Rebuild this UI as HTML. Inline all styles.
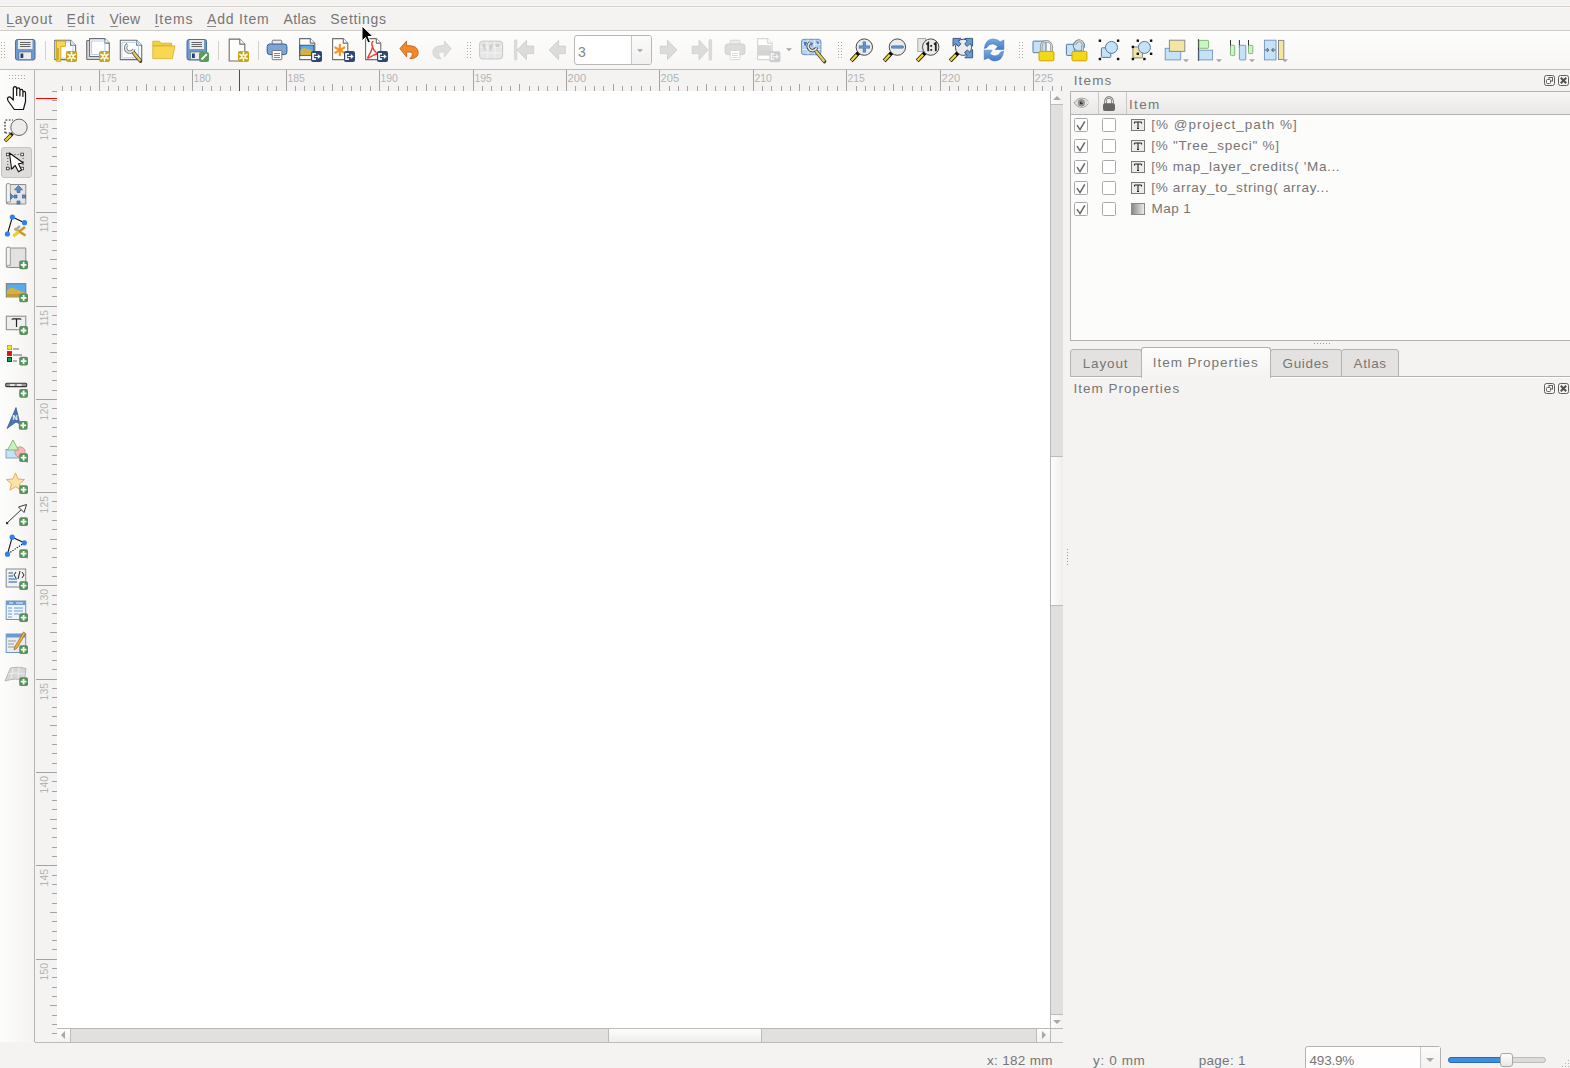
<!DOCTYPE html><html><head><meta charset="utf-8"><style>
html,body{margin:0;padding:0;}
body{width:1570px;height:1068px;overflow:hidden;position:relative;background:#f4f3f1;font-family:"Liberation Sans",sans-serif;}
.t{position:absolute;white-space:pre;line-height:1;}
svg{position:absolute;overflow:visible;}
</style></head><body>
<div style="position:absolute;left:0px;top:5px;width:1570px;height:1px;background:#f9f9f8"></div>
<div style="position:absolute;left:0px;top:6px;width:1570px;height:1px;background:repeating-linear-gradient(90deg,#d2d1cf 0,#d2d1cf 4px,#d8cdb8 4px,#d8cdb8 5px)"></div>
<div style="position:absolute;left:0px;top:7px;width:1570px;height:1px;background:#f9f9f8"></div>
<div class="t" style="left:6.0px;top:11.95px;font-size:14px;color:#767676;letter-spacing:0.84px;">Layout</div>
<div style="position:absolute;left:7px;top:26px;width:7.5px;height:1px;background:#8a8a8a"></div>
<div class="t" style="left:66.5px;top:11.95px;font-size:14px;color:#767676;letter-spacing:1.267px;">Edit</div>
<div style="position:absolute;left:68px;top:26px;width:7px;height:1px;background:#8a8a8a"></div>
<div class="t" style="left:109.6px;top:11.95px;font-size:14px;color:#767676;letter-spacing:0.167px;">View</div>
<div style="position:absolute;left:110px;top:26px;width:7.5px;height:1px;background:#8a8a8a"></div>
<div class="t" style="left:154.4px;top:11.95px;font-size:14px;color:#767676;letter-spacing:1.0px;">Items</div>
<div style="position:absolute;left:155px;top:26px;width:3.5px;height:1px;background:#8a8a8a"></div>
<div class="t" style="left:207.1px;top:11.95px;font-size:14px;color:#767676;letter-spacing:0.786px;">Add Item</div>
<div style="position:absolute;left:207px;top:26px;width:9px;height:1px;background:#8a8a8a"></div>
<div class="t" style="left:283.5px;top:11.95px;font-size:14px;color:#767676;letter-spacing:0.375px;">Atlas</div>
<div class="t" style="left:330.3px;top:11.95px;font-size:14px;color:#767676;letter-spacing:0.729px;">Settings</div>
<div style="position:absolute;left:0px;top:30px;width:1570px;height:1px;background:#cfcdca"></div>
<div style="position:absolute;left:0px;top:31px;width:1570px;height:38px;background:linear-gradient(#fdfdfc,#f7f6f5)"></div>
<div style="position:absolute;left:0px;top:69px;width:1570px;height:1px;background:#bdbcba"></div>
<div style="position:absolute;left:0px;top:70px;width:34px;height:972px;background:linear-gradient(90deg,#fdfdfc,#f4f3f1)"></div>
<div style="position:absolute;left:34px;top:70px;width:1px;height:972px;background:#b6b5b3"></div>
<div style="position:absolute;left:35px;top:70px;width:1028px;height:21px;background:#f4f3f1"></div>
<div style="position:absolute;left:35px;top:91px;width:22px;height:951px;background:#f4f3f1"></div>
<div style="position:absolute;left:57px;top:91px;width:993px;height:937px;background:#ffffff"></div>
<svg style="position:absolute;left:35px;top:70px" width="1028" height="21"><g stroke="#a3a3a3" stroke-width="1"><line x1="27.5" y1="16" x2="27.5" y2="21"/><line x1="36.5" y1="16" x2="36.5" y2="21"/><line x1="45.5" y1="16" x2="45.5" y2="21"/><line x1="55.5" y1="16" x2="55.5" y2="21"/><line x1="64.5" y1="0" x2="64.5" y2="21"/><line x1="73.5" y1="16" x2="73.5" y2="21"/><line x1="83.5" y1="16" x2="83.5" y2="21"/><line x1="92.5" y1="16" x2="92.5" y2="21"/><line x1="101.5" y1="16" x2="101.5" y2="21"/><line x1="111.5" y1="14" x2="111.5" y2="21"/><line x1="120.5" y1="16" x2="120.5" y2="21"/><line x1="129.5" y1="16" x2="129.5" y2="21"/><line x1="139.5" y1="16" x2="139.5" y2="21"/><line x1="148.5" y1="16" x2="148.5" y2="21"/><line x1="157.5" y1="0" x2="157.5" y2="21"/><line x1="167.5" y1="16" x2="167.5" y2="21"/><line x1="176.5" y1="16" x2="176.5" y2="21"/><line x1="185.5" y1="16" x2="185.5" y2="21"/><line x1="195.5" y1="16" x2="195.5" y2="21"/><line x1="204.5" y1="14" x2="204.5" y2="21"/><line x1="213.5" y1="16" x2="213.5" y2="21"/><line x1="223.5" y1="16" x2="223.5" y2="21"/><line x1="232.5" y1="16" x2="232.5" y2="21"/><line x1="241.5" y1="16" x2="241.5" y2="21"/><line x1="251.5" y1="0" x2="251.5" y2="21"/><line x1="260.5" y1="16" x2="260.5" y2="21"/><line x1="269.5" y1="16" x2="269.5" y2="21"/><line x1="279.5" y1="16" x2="279.5" y2="21"/><line x1="288.5" y1="16" x2="288.5" y2="21"/><line x1="297.5" y1="14" x2="297.5" y2="21"/><line x1="307.5" y1="16" x2="307.5" y2="21"/><line x1="316.5" y1="16" x2="316.5" y2="21"/><line x1="325.5" y1="16" x2="325.5" y2="21"/><line x1="335.5" y1="16" x2="335.5" y2="21"/><line x1="344.5" y1="0" x2="344.5" y2="21"/><line x1="353.5" y1="16" x2="353.5" y2="21"/><line x1="363.5" y1="16" x2="363.5" y2="21"/><line x1="372.5" y1="16" x2="372.5" y2="21"/><line x1="381.5" y1="16" x2="381.5" y2="21"/><line x1="391.5" y1="14" x2="391.5" y2="21"/><line x1="400.5" y1="16" x2="400.5" y2="21"/><line x1="410.5" y1="16" x2="410.5" y2="21"/><line x1="419.5" y1="16" x2="419.5" y2="21"/><line x1="428.5" y1="16" x2="428.5" y2="21"/><line x1="438.5" y1="0" x2="438.5" y2="21"/><line x1="447.5" y1="16" x2="447.5" y2="21"/><line x1="456.5" y1="16" x2="456.5" y2="21"/><line x1="466.5" y1="16" x2="466.5" y2="21"/><line x1="475.5" y1="16" x2="475.5" y2="21"/><line x1="484.5" y1="14" x2="484.5" y2="21"/><line x1="494.5" y1="16" x2="494.5" y2="21"/><line x1="503.5" y1="16" x2="503.5" y2="21"/><line x1="512.5" y1="16" x2="512.5" y2="21"/><line x1="522.5" y1="16" x2="522.5" y2="21"/><line x1="531.5" y1="0" x2="531.5" y2="21"/><line x1="540.5" y1="16" x2="540.5" y2="21"/><line x1="550.5" y1="16" x2="550.5" y2="21"/><line x1="559.5" y1="16" x2="559.5" y2="21"/><line x1="568.5" y1="16" x2="568.5" y2="21"/><line x1="578.5" y1="14" x2="578.5" y2="21"/><line x1="587.5" y1="16" x2="587.5" y2="21"/><line x1="596.5" y1="16" x2="596.5" y2="21"/><line x1="606.5" y1="16" x2="606.5" y2="21"/><line x1="615.5" y1="16" x2="615.5" y2="21"/><line x1="624.5" y1="0" x2="624.5" y2="21"/><line x1="634.5" y1="16" x2="634.5" y2="21"/><line x1="643.5" y1="16" x2="643.5" y2="21"/><line x1="652.5" y1="16" x2="652.5" y2="21"/><line x1="662.5" y1="16" x2="662.5" y2="21"/><line x1="671.5" y1="14" x2="671.5" y2="21"/><line x1="680.5" y1="16" x2="680.5" y2="21"/><line x1="690.5" y1="16" x2="690.5" y2="21"/><line x1="699.5" y1="16" x2="699.5" y2="21"/><line x1="708.5" y1="16" x2="708.5" y2="21"/><line x1="718.5" y1="0" x2="718.5" y2="21"/><line x1="727.5" y1="16" x2="727.5" y2="21"/><line x1="736.5" y1="16" x2="736.5" y2="21"/><line x1="746.5" y1="16" x2="746.5" y2="21"/><line x1="755.5" y1="16" x2="755.5" y2="21"/><line x1="764.5" y1="14" x2="764.5" y2="21"/><line x1="774.5" y1="16" x2="774.5" y2="21"/><line x1="783.5" y1="16" x2="783.5" y2="21"/><line x1="792.5" y1="16" x2="792.5" y2="21"/><line x1="802.5" y1="16" x2="802.5" y2="21"/><line x1="811.5" y1="0" x2="811.5" y2="21"/><line x1="821.5" y1="16" x2="821.5" y2="21"/><line x1="830.5" y1="16" x2="830.5" y2="21"/><line x1="839.5" y1="16" x2="839.5" y2="21"/><line x1="849.5" y1="16" x2="849.5" y2="21"/><line x1="858.5" y1="14" x2="858.5" y2="21"/><line x1="867.5" y1="16" x2="867.5" y2="21"/><line x1="877.5" y1="16" x2="877.5" y2="21"/><line x1="886.5" y1="16" x2="886.5" y2="21"/><line x1="895.5" y1="16" x2="895.5" y2="21"/><line x1="905.5" y1="0" x2="905.5" y2="21"/><line x1="914.5" y1="16" x2="914.5" y2="21"/><line x1="923.5" y1="16" x2="923.5" y2="21"/><line x1="933.5" y1="16" x2="933.5" y2="21"/><line x1="942.5" y1="16" x2="942.5" y2="21"/><line x1="951.5" y1="14" x2="951.5" y2="21"/><line x1="961.5" y1="16" x2="961.5" y2="21"/><line x1="970.5" y1="16" x2="970.5" y2="21"/><line x1="979.5" y1="16" x2="979.5" y2="21"/><line x1="989.5" y1="16" x2="989.5" y2="21"/><line x1="998.5" y1="0" x2="998.5" y2="21"/><line x1="1007.5" y1="16" x2="1007.5" y2="21"/><line x1="1017.5" y1="16" x2="1017.5" y2="21"/><line x1="1026.5" y1="16" x2="1026.5" y2="21"/></g><g fill="#b2b4b7" font-family="Liberation Sans" font-size="11"><text x="65.5" y="12" textLength="16.200000000000003" lengthAdjust="spacingAndGlyphs">175</text><text x="158.5" y="12" textLength="17.400000000000002" lengthAdjust="spacingAndGlyphs">180</text><text x="252.5" y="12" textLength="17.400000000000002" lengthAdjust="spacingAndGlyphs">185</text><text x="345.5" y="12" textLength="17.400000000000002" lengthAdjust="spacingAndGlyphs">190</text><text x="439.5" y="12" textLength="17.400000000000002" lengthAdjust="spacingAndGlyphs">195</text><text x="532.5" y="12" textLength="18.6" lengthAdjust="spacingAndGlyphs">200</text><text x="625.5" y="12" textLength="18.6" lengthAdjust="spacingAndGlyphs">205</text><text x="719.5" y="12" textLength="17.400000000000002" lengthAdjust="spacingAndGlyphs">210</text><text x="812.5" y="12" textLength="17.400000000000002" lengthAdjust="spacingAndGlyphs">215</text><text x="906.5" y="12" textLength="18.6" lengthAdjust="spacingAndGlyphs">220</text><text x="999.5" y="12" textLength="18.6" lengthAdjust="spacingAndGlyphs">225</text></g></svg>
<svg style="position:absolute;left:35px;top:91px" width="22" height="951"><g stroke="#a3a3a3" stroke-width="1"><line x1="17" y1="0.5" x2="22" y2="0.5"/><line x1="17" y1="9.5" x2="22" y2="9.5"/><line x1="17" y1="19.5" x2="22" y2="19.5"/><line x1="1" y1="28.5" x2="22" y2="28.5"/><line x1="17" y1="37.5" x2="22" y2="37.5"/><line x1="17" y1="47.5" x2="22" y2="47.5"/><line x1="17" y1="56.5" x2="22" y2="56.5"/><line x1="17" y1="65.5" x2="22" y2="65.5"/><line x1="15" y1="75.5" x2="22" y2="75.5"/><line x1="17" y1="84.5" x2="22" y2="84.5"/><line x1="17" y1="93.5" x2="22" y2="93.5"/><line x1="17" y1="103.5" x2="22" y2="103.5"/><line x1="17" y1="112.5" x2="22" y2="112.5"/><line x1="1" y1="121.5" x2="22" y2="121.5"/><line x1="17" y1="131.5" x2="22" y2="131.5"/><line x1="17" y1="140.5" x2="22" y2="140.5"/><line x1="17" y1="149.5" x2="22" y2="149.5"/><line x1="17" y1="159.5" x2="22" y2="159.5"/><line x1="15" y1="168.5" x2="22" y2="168.5"/><line x1="17" y1="177.5" x2="22" y2="177.5"/><line x1="17" y1="187.5" x2="22" y2="187.5"/><line x1="17" y1="196.5" x2="22" y2="196.5"/><line x1="17" y1="205.5" x2="22" y2="205.5"/><line x1="1" y1="215.5" x2="22" y2="215.5"/><line x1="17" y1="224.5" x2="22" y2="224.5"/><line x1="17" y1="233.5" x2="22" y2="233.5"/><line x1="17" y1="243.5" x2="22" y2="243.5"/><line x1="17" y1="252.5" x2="22" y2="252.5"/><line x1="15" y1="261.5" x2="22" y2="261.5"/><line x1="17" y1="271.5" x2="22" y2="271.5"/><line x1="17" y1="280.5" x2="22" y2="280.5"/><line x1="17" y1="289.5" x2="22" y2="289.5"/><line x1="17" y1="299.5" x2="22" y2="299.5"/><line x1="1" y1="308.5" x2="22" y2="308.5"/><line x1="17" y1="317.5" x2="22" y2="317.5"/><line x1="17" y1="327.5" x2="22" y2="327.5"/><line x1="17" y1="336.5" x2="22" y2="336.5"/><line x1="17" y1="345.5" x2="22" y2="345.5"/><line x1="15" y1="355.5" x2="22" y2="355.5"/><line x1="17" y1="364.5" x2="22" y2="364.5"/><line x1="17" y1="373.5" x2="22" y2="373.5"/><line x1="17" y1="383.5" x2="22" y2="383.5"/><line x1="17" y1="392.5" x2="22" y2="392.5"/><line x1="1" y1="401.5" x2="22" y2="401.5"/><line x1="17" y1="410.5" x2="22" y2="410.5"/><line x1="17" y1="420.5" x2="22" y2="420.5"/><line x1="17" y1="429.5" x2="22" y2="429.5"/><line x1="17" y1="438.5" x2="22" y2="438.5"/><line x1="15" y1="448.5" x2="22" y2="448.5"/><line x1="17" y1="457.5" x2="22" y2="457.5"/><line x1="17" y1="466.5" x2="22" y2="466.5"/><line x1="17" y1="476.5" x2="22" y2="476.5"/><line x1="17" y1="485.5" x2="22" y2="485.5"/><line x1="1" y1="494.5" x2="22" y2="494.5"/><line x1="17" y1="504.5" x2="22" y2="504.5"/><line x1="17" y1="513.5" x2="22" y2="513.5"/><line x1="17" y1="522.5" x2="22" y2="522.5"/><line x1="17" y1="532.5" x2="22" y2="532.5"/><line x1="15" y1="541.5" x2="22" y2="541.5"/><line x1="17" y1="550.5" x2="22" y2="550.5"/><line x1="17" y1="560.5" x2="22" y2="560.5"/><line x1="17" y1="569.5" x2="22" y2="569.5"/><line x1="17" y1="578.5" x2="22" y2="578.5"/><line x1="1" y1="588.5" x2="22" y2="588.5"/><line x1="17" y1="597.5" x2="22" y2="597.5"/><line x1="17" y1="606.5" x2="22" y2="606.5"/><line x1="17" y1="616.5" x2="22" y2="616.5"/><line x1="17" y1="625.5" x2="22" y2="625.5"/><line x1="15" y1="634.5" x2="22" y2="634.5"/><line x1="17" y1="644.5" x2="22" y2="644.5"/><line x1="17" y1="653.5" x2="22" y2="653.5"/><line x1="17" y1="662.5" x2="22" y2="662.5"/><line x1="17" y1="672.5" x2="22" y2="672.5"/><line x1="1" y1="681.5" x2="22" y2="681.5"/><line x1="17" y1="690.5" x2="22" y2="690.5"/><line x1="17" y1="700.5" x2="22" y2="700.5"/><line x1="17" y1="709.5" x2="22" y2="709.5"/><line x1="17" y1="718.5" x2="22" y2="718.5"/><line x1="15" y1="728.5" x2="22" y2="728.5"/><line x1="17" y1="737.5" x2="22" y2="737.5"/><line x1="17" y1="746.5" x2="22" y2="746.5"/><line x1="17" y1="756.5" x2="22" y2="756.5"/><line x1="17" y1="765.5" x2="22" y2="765.5"/><line x1="1" y1="774.5" x2="22" y2="774.5"/><line x1="17" y1="784.5" x2="22" y2="784.5"/><line x1="17" y1="793.5" x2="22" y2="793.5"/><line x1="17" y1="802.5" x2="22" y2="802.5"/><line x1="17" y1="812.5" x2="22" y2="812.5"/><line x1="15" y1="821.5" x2="22" y2="821.5"/><line x1="17" y1="830.5" x2="22" y2="830.5"/><line x1="17" y1="840.5" x2="22" y2="840.5"/><line x1="17" y1="849.5" x2="22" y2="849.5"/><line x1="17" y1="858.5" x2="22" y2="858.5"/><line x1="1" y1="868.5" x2="22" y2="868.5"/><line x1="17" y1="877.5" x2="22" y2="877.5"/><line x1="17" y1="886.5" x2="22" y2="886.5"/><line x1="17" y1="896.5" x2="22" y2="896.5"/><line x1="17" y1="905.5" x2="22" y2="905.5"/><line x1="15" y1="914.5" x2="22" y2="914.5"/><line x1="17" y1="924.5" x2="22" y2="924.5"/><line x1="17" y1="933.5" x2="22" y2="933.5"/><line x1="17" y1="942.5" x2="22" y2="942.5"/></g><g fill="#b2b4b7" font-family="Liberation Sans" font-size="11"><text transform="translate(13,32) rotate(-90)" text-anchor="end" textLength="17.400000000000002" lengthAdjust="spacingAndGlyphs">105</text><text transform="translate(13,125) rotate(-90)" text-anchor="end" textLength="16.200000000000003" lengthAdjust="spacingAndGlyphs">110</text><text transform="translate(13,219) rotate(-90)" text-anchor="end" textLength="16.200000000000003" lengthAdjust="spacingAndGlyphs">115</text><text transform="translate(13,312) rotate(-90)" text-anchor="end" textLength="17.400000000000002" lengthAdjust="spacingAndGlyphs">120</text><text transform="translate(13,405) rotate(-90)" text-anchor="end" textLength="17.400000000000002" lengthAdjust="spacingAndGlyphs">125</text><text transform="translate(13,498) rotate(-90)" text-anchor="end" textLength="17.400000000000002" lengthAdjust="spacingAndGlyphs">130</text><text transform="translate(13,592) rotate(-90)" text-anchor="end" textLength="17.400000000000002" lengthAdjust="spacingAndGlyphs">135</text><text transform="translate(13,685) rotate(-90)" text-anchor="end" textLength="17.400000000000002" lengthAdjust="spacingAndGlyphs">140</text><text transform="translate(13,778) rotate(-90)" text-anchor="end" textLength="17.400000000000002" lengthAdjust="spacingAndGlyphs">145</text><text transform="translate(13,872) rotate(-90)" text-anchor="end" textLength="17.400000000000002" lengthAdjust="spacingAndGlyphs">150</text></g></svg>
<div style="position:absolute;left:239px;top:70px;width:1px;height:21px;background:#ff0000"></div>
<div style="position:absolute;left:36px;top:98px;width:21px;height:1px;background:#ff0000"></div>
<div style="position:absolute;left:35px;top:1042px;width:1028px;height:1px;background:#bcbbb9"></div>
<div style="position:absolute;left:1050px;top:91px;width:1px;height:951px;background:#b9b8b6"></div>
<div style="position:absolute;left:1051px;top:91px;width:12px;height:937px;background:#e1e0de"></div>
<div style="position:absolute;left:1051px;top:91px;width:12px;height:13px;background:linear-gradient(90deg,#fdfdfd,#f2f1f0)"></div>
<div style="position:absolute;left:1051px;top:104px;width:12px;height:1px;background:#bdbcba"></div>
<div style="position:absolute;left:1051px;top:456px;width:12px;height:150px;background:linear-gradient(90deg,#fdfdfd,#efeeec);border-top:1px solid #bdbcba;border-bottom:1px solid #bdbcba;box-sizing:border-box"></div>
<div style="position:absolute;left:1051px;top:1014px;width:12px;height:1px;background:#bdbcba"></div>
<div style="position:absolute;left:1051px;top:1015px;width:12px;height:13px;background:linear-gradient(90deg,#fdfdfd,#f2f1f0)"></div>
<svg style="left:1052px;top:95px" width="10" height="6"><path d="M1 5 L5 1 L9 5 Z" fill="#a8a8a8"/></svg>
<svg style="left:1052px;top:1019px" width="10" height="6"><path d="M1 1 L5 5 L9 1 Z" fill="#a8a8a8"/></svg>
<div style="position:absolute;left:57px;top:1028px;width:1006px;height:1px;background:#b9b8b6"></div>
<div style="position:absolute;left:57px;top:1029px;width:993px;height:13px;background:#e1e0de"></div>
<div style="position:absolute;left:57px;top:1029px;width:13px;height:13px;background:linear-gradient(#fdfdfd,#f2f1f0)"></div>
<div style="position:absolute;left:70px;top:1029px;width:1px;height:13px;background:#bdbcba"></div>
<div style="position:absolute;left:608px;top:1028px;width:154px;height:15px;background:linear-gradient(#fdfdfd,#efeeec);border:1px solid #bdbcba;box-sizing:border-box"></div>
<div style="position:absolute;left:1036px;top:1029px;width:1px;height:13px;background:#bdbcba"></div>
<div style="position:absolute;left:1037px;top:1029px;width:13px;height:13px;background:linear-gradient(#fdfdfd,#f2f1f0)"></div>
<div style="position:absolute;left:1051px;top:1029px;width:12px;height:13px;background:#f4f3f1"></div>
<svg style="left:60px;top:1030px" width="6" height="10"><path d="M5 1 L1 5 L5 9 Z" fill="#a8a8a8"/></svg>
<svg style="left:1041px;top:1030px" width="6" height="10"><path d="M1 1 L5 5 L1 9 Z" fill="#a8a8a8"/></svg>
<div class="t" style="left:1073.7px;top:74.37px;font-size:13.5px;color:#767676;letter-spacing:1.15px;">Items</div>
<svg style="left:1544px;top:75px" width="25" height="11" viewBox="0 0 25 11"><rect x="0.5" y="0.5" width="10" height="10" rx="2" fill="none" stroke="#5f5f5f" stroke-width="1"/><rect x="5" y="2.5" width="3.5" height="3.5" fill="none" stroke="#5f5f5f" stroke-width="1"/><rect x="2.5" y="4.5" width="4" height="4" rx="1" fill="#fff" stroke="#5f5f5f" stroke-width="1"/><g transform="translate(14,0)"><rect x="0.5" y="0.5" width="10" height="10" rx="2" fill="none" stroke="#5f5f5f" stroke-width="1"/><path d="M2.8 2.8 L8.2 8.2 M8.2 2.8 L2.8 8.2" stroke="#505050" stroke-width="2"/></g></svg>
<div style="position:absolute;left:1070px;top:91px;width:500px;height:250px;background:#fcfcfb;border-left:1px solid #b3b2b0;border-top:1px solid #b3b2b0;border-bottom:1px solid #b3b2b0;box-sizing:border-box"></div>
<div style="position:absolute;left:1071px;top:92px;width:499px;height:22px;background:linear-gradient(#f7f6f5,#e9e8e6)"></div>
<div style="position:absolute;left:1071px;top:114px;width:499px;height:1px;background:#b3b2b0"></div>
<div style="position:absolute;left:1098px;top:92px;width:1px;height:22px;background:#c9c8c6"></div>
<div style="position:absolute;left:1126px;top:92px;width:1px;height:22px;background:#c9c8c6"></div>
<svg style="left:1073px;top:97px" width="16" height="12" viewBox="0 0 16 12"><path d="M0.8 6 Q4 1 8.5 1 Q13 1 15.5 4.5 M0.8 6 Q4 10.5 8.5 10.5 Q13 10.5 15.5 6.5" fill="none" stroke="#9a9a9a" stroke-width="0.9"/><path d="M2 6 Q5 2.5 8.5 2.5 Q12 2.5 14 6 Q12 9 8.5 9 Q5 9 2 6Z" fill="#f2f2f2" stroke="#b0b0b0" stroke-width="0.6"/><circle cx="8.3" cy="5.8" r="3.3" fill="#9a9a9a" stroke="#777" stroke-width="0.6"/><circle cx="8.3" cy="5.8" r="1.6" fill="#333"/><circle cx="9" cy="5" r="0.6" fill="#fff"/></svg>
<svg style="left:1102px;top:95.5px" width="14" height="16" viewBox="0 0 14 16"><path d="M3.5 8 V5 A3.5 3.5 0 0 1 10.5 5 V8" fill="none" stroke="#666" stroke-width="2.4"/><path d="M3.5 8 V5 A3.5 3.5 0 0 1 10.5 5 V8" fill="none" stroke="#f0efed" stroke-width="0.9"/><rect x="1" y="7.3" width="12" height="7.6" rx="2" fill="#666"/></svg>
<div class="t" style="left:1129.0px;top:97.57px;font-size:13.5px;color:#767676;letter-spacing:1.333px;">Item</div>
<svg style="left:1074px;top:118px" width="14" height="14" viewBox="0 0 14 14"><rect x="0.5" y="0.5" width="13" height="13" rx="1" fill="#fff" stroke="#aaaaaa" stroke-width="1"/><path d="M3 7.2 L6 11.6 L10.8 3.3" fill="none" stroke="#666" stroke-width="1.5"/></svg>
<svg style="left:1102px;top:118px" width="14" height="14" viewBox="0 0 14 14"><rect x="0.5" y="0.5" width="13" height="13" rx="1" fill="#fff" stroke="#aaaaaa" stroke-width="1"/></svg>
<svg style="left:1131px;top:119px" width="14" height="12" viewBox="0 0 14 12"><rect x="0.5" y="0.5" width="13" height="11" fill="#ececec" stroke="#7a7a7a" stroke-width="1"/><path d="M3.5 3 H10.5 M3.5 3 V4.5 M10.5 3 V4.5 M7 3 V9.5 M6 9.5 H8" fill="none" stroke="#222" stroke-width="1.1"/></svg>
<div class="t" style="left:1151.2px;top:118.37px;font-size:13.5px;color:#767676;letter-spacing:1.033px;">[% @project_path %]</div>
<svg style="left:1074px;top:139px" width="14" height="14" viewBox="0 0 14 14"><rect x="0.5" y="0.5" width="13" height="13" rx="1" fill="#fff" stroke="#aaaaaa" stroke-width="1"/><path d="M3 7.2 L6 11.6 L10.8 3.3" fill="none" stroke="#666" stroke-width="1.5"/></svg>
<svg style="left:1102px;top:139px" width="14" height="14" viewBox="0 0 14 14"><rect x="0.5" y="0.5" width="13" height="13" rx="1" fill="#fff" stroke="#aaaaaa" stroke-width="1"/></svg>
<svg style="left:1131px;top:140px" width="14" height="12" viewBox="0 0 14 12"><rect x="0.5" y="0.5" width="13" height="11" fill="#ececec" stroke="#7a7a7a" stroke-width="1"/><path d="M3.5 3 H10.5 M3.5 3 V4.5 M10.5 3 V4.5 M7 3 V9.5 M6 9.5 H8" fill="none" stroke="#222" stroke-width="1.1"/></svg>
<div class="t" style="left:1151.2px;top:139.37px;font-size:13.5px;color:#767676;letter-spacing:0.765px;">[% "Tree_speci" %]</div>
<svg style="left:1074px;top:160px" width="14" height="14" viewBox="0 0 14 14"><rect x="0.5" y="0.5" width="13" height="13" rx="1" fill="#fff" stroke="#aaaaaa" stroke-width="1"/><path d="M3 7.2 L6 11.6 L10.8 3.3" fill="none" stroke="#666" stroke-width="1.5"/></svg>
<svg style="left:1102px;top:160px" width="14" height="14" viewBox="0 0 14 14"><rect x="0.5" y="0.5" width="13" height="13" rx="1" fill="#fff" stroke="#aaaaaa" stroke-width="1"/></svg>
<svg style="left:1131px;top:161px" width="14" height="12" viewBox="0 0 14 12"><rect x="0.5" y="0.5" width="13" height="11" fill="#ececec" stroke="#7a7a7a" stroke-width="1"/><path d="M3.5 3 H10.5 M3.5 3 V4.5 M10.5 3 V4.5 M7 3 V9.5 M6 9.5 H8" fill="none" stroke="#222" stroke-width="1.1"/></svg>
<div class="t" style="left:1151.2px;top:160.37px;font-size:13.5px;color:#767676;letter-spacing:0.659px;">[% map_layer_credits( 'Ma...</div>
<svg style="left:1074px;top:181px" width="14" height="14" viewBox="0 0 14 14"><rect x="0.5" y="0.5" width="13" height="13" rx="1" fill="#fff" stroke="#aaaaaa" stroke-width="1"/><path d="M3 7.2 L6 11.6 L10.8 3.3" fill="none" stroke="#666" stroke-width="1.5"/></svg>
<svg style="left:1102px;top:181px" width="14" height="14" viewBox="0 0 14 14"><rect x="0.5" y="0.5" width="13" height="13" rx="1" fill="#fff" stroke="#aaaaaa" stroke-width="1"/></svg>
<svg style="left:1131px;top:182px" width="14" height="12" viewBox="0 0 14 12"><rect x="0.5" y="0.5" width="13" height="11" fill="#ececec" stroke="#7a7a7a" stroke-width="1"/><path d="M3.5 3 H10.5 M3.5 3 V4.5 M10.5 3 V4.5 M7 3 V9.5 M6 9.5 H8" fill="none" stroke="#222" stroke-width="1.1"/></svg>
<div class="t" style="left:1151.2px;top:181.37px;font-size:13.5px;color:#767676;letter-spacing:0.696px;">[% array_to_string( array...</div>
<svg style="left:1074px;top:202px" width="14" height="14" viewBox="0 0 14 14"><rect x="0.5" y="0.5" width="13" height="13" rx="1" fill="#fff" stroke="#aaaaaa" stroke-width="1"/><path d="M3 7.2 L6 11.6 L10.8 3.3" fill="none" stroke="#666" stroke-width="1.5"/></svg>
<svg style="left:1102px;top:202px" width="14" height="14" viewBox="0 0 14 14"><rect x="0.5" y="0.5" width="13" height="13" rx="1" fill="#fff" stroke="#aaaaaa" stroke-width="1"/></svg>
<svg style="left:1131px;top:203px" width="14" height="12" viewBox="0 0 14 12"><defs><linearGradient id="mg" x1="0" x2="1"><stop offset="0" stop-color="#888"/><stop offset="1" stop-color="#eee"/></linearGradient></defs><rect x="0.5" y="0.5" width="13" height="11" fill="url(#mg)" stroke="#8a8a8a" stroke-width="1"/></svg>
<div class="t" style="left:1151.5px;top:202.37px;font-size:13.5px;color:#767676;letter-spacing:0.45px;">Map 1</div>
<svg style="left:1314px;top:343px" width="18" height="1" viewBox="0 0 18 1"><rect x="0" y="0" width="1" height="1" fill="#9a9a9a"/><rect x="3" y="0" width="1" height="1" fill="#9a9a9a"/><rect x="6" y="0" width="1" height="1" fill="#9a9a9a"/><rect x="9" y="0" width="1" height="1" fill="#9a9a9a"/><rect x="12" y="0" width="1" height="1" fill="#9a9a9a"/><rect x="15" y="0" width="1" height="1" fill="#9a9a9a"/></svg>
<div style="position:absolute;left:1070px;top:376px;width:500px;height:1px;background:#b3b2b0"></div>
<div style="position:absolute;left:1070px;top:377px;width:500px;height:1px;background:#ffffff"></div>
<div style="position:absolute;left:1070px;top:349px;width:72px;height:28px;background:#e3e2e0;border:1px solid #b3b2b0;border-radius:3px 3px 0 0;box-sizing:border-box"></div><div class="t" style="left:1082.7px;top:357.47px;font-size:13.5px;color:#767676;letter-spacing:0.86px;">Layout</div>
<div style="position:absolute;left:1270px;top:349px;width:72px;height:28px;background:#e3e2e0;border:1px solid #b3b2b0;border-radius:3px 3px 0 0;box-sizing:border-box"></div><div class="t" style="left:1282.5px;top:357.47px;font-size:13.5px;color:#767676;letter-spacing:0.66px;">Guides</div>
<div style="position:absolute;left:1341px;top:349px;width:58px;height:28px;background:#e3e2e0;border:1px solid #b3b2b0;border-radius:3px 3px 0 0;box-sizing:border-box"></div><div class="t" style="left:1353.5px;top:357.47px;font-size:13.5px;color:#767676;letter-spacing:0.625px;">Atlas</div>
<div style="position:absolute;left:1141px;top:347px;width:130px;height:31px;background:linear-gradient(#fdfdfd,#f4f3f1);border:1px solid #b3b2b0;border-bottom:none;border-radius:3px 3px 0 0;box-sizing:border-box"></div><div class="t" style="left:1152.8px;top:356.27px;font-size:13.5px;color:#767676;letter-spacing:0.964px;">Item Properties</div>
<div class="t" style="left:1073.6px;top:382.47px;font-size:13.5px;color:#767676;letter-spacing:1.0px;">Item Properties</div>
<svg style="left:1544px;top:383px" width="25" height="11" viewBox="0 0 25 11"><rect x="0.5" y="0.5" width="10" height="10" rx="2" fill="none" stroke="#5f5f5f" stroke-width="1"/><rect x="5" y="2.5" width="3.5" height="3.5" fill="none" stroke="#5f5f5f" stroke-width="1"/><rect x="2.5" y="4.5" width="4" height="4" rx="1" fill="#fff" stroke="#5f5f5f" stroke-width="1"/><g transform="translate(14,0)"><rect x="0.5" y="0.5" width="10" height="10" rx="2" fill="none" stroke="#5f5f5f" stroke-width="1"/><path d="M2.8 2.8 L8.2 8.2 M8.2 2.8 L2.8 8.2" stroke="#505050" stroke-width="2"/></g></svg>
<svg style="left:1067px;top:549px" width="1" height="18" viewBox="0 0 1 18"><rect x="0" y="0" width="1" height="1" fill="#9a9a9a"/><rect x="0" y="3" width="1" height="1" fill="#9a9a9a"/><rect x="0" y="6" width="1" height="1" fill="#9a9a9a"/><rect x="0" y="9" width="1" height="1" fill="#9a9a9a"/><rect x="0" y="12" width="1" height="1" fill="#9a9a9a"/><rect x="0" y="15" width="1" height="1" fill="#9a9a9a"/></svg>
<div class="t" style="left:987.0px;top:1053.57px;font-size:13.5px;color:#767676;letter-spacing:0.3px;">x: 182 mm</div>
<div class="t" style="left:1093.0px;top:1053.57px;font-size:13.5px;color:#767676;letter-spacing:0.633px;">y: 0 mm</div>
<div class="t" style="left:1198.7px;top:1053.57px;font-size:13.5px;color:#767676;letter-spacing:0.3px;">page: 1</div>
<div style="position:absolute;left:1305px;top:1046px;width:136px;height:30px;background:#fefefe;border:1px solid #b3b2b0;border-radius:3px;box-sizing:border-box"></div>
<div style="position:absolute;left:1420px;top:1047px;width:1px;height:30px;background:#c9c8c6"></div>
<div style="position:absolute;left:1421px;top:1047px;width:19px;height:30px;background:linear-gradient(#fbfbfa,#efeeec)"></div>
<svg style="left:1425px;top:1057px" width="10" height="6"><path d="M1 1 L5 5 L9 1 Z" fill="#a8a8a8"/></svg>
<div class="t" style="left:1309.6px;top:1053.57px;font-size:13.5px;color:#767676;letter-spacing:-0.24px;">493.9%</div>
<div style="position:absolute;left:1448px;top:1057px;width:98px;height:6px;background:#dcdbd9;border:1px solid #bdbcba;border-radius:3px;box-sizing:border-box"></div>
<div style="position:absolute;left:1448px;top:1057px;width:56px;height:6px;background:#3d8ee3;border:1px solid #2a6ab8;border-radius:3px;box-sizing:border-box"></div>
<div style="position:absolute;left:1500px;top:1053px;width:13px;height:14px;background:linear-gradient(#fdfdfd,#e9e8e6);border:1px solid #a9a8a6;border-radius:3px;box-sizing:border-box"></div>
<svg style="left:1560px;top:1058px" width="10" height="10"><rect x="8" y="2" width="1" height="1" fill="#b0b0b0"/><rect x="5" y="5" width="1" height="1" fill="#b0b0b0"/><rect x="8" y="5" width="1" height="1" fill="#b0b0b0"/><rect x="2" y="8" width="1" height="1" fill="#b0b0b0"/><rect x="5" y="8" width="1" height="1" fill="#b0b0b0"/><rect x="8" y="8" width="1" height="1" fill="#b0b0b0"/></svg>
<svg style="left:1px;top:42px" width="5" height="17" viewBox="0 0 5 17"><rect x="0" y="0" width="1" height="1" fill="#a8a8a8"/><rect x="0" y="3" width="1" height="1" fill="#a8a8a8"/><rect x="0" y="6" width="1" height="1" fill="#a8a8a8"/><rect x="0" y="9" width="1" height="1" fill="#a8a8a8"/><rect x="0" y="12" width="1" height="1" fill="#a8a8a8"/><rect x="0" y="15" width="1" height="1" fill="#a8a8a8"/><rect x="3" y="0" width="1" height="1" fill="#a8a8a8"/><rect x="3" y="3" width="1" height="1" fill="#a8a8a8"/><rect x="3" y="6" width="1" height="1" fill="#a8a8a8"/><rect x="3" y="9" width="1" height="1" fill="#a8a8a8"/><rect x="3" y="12" width="1" height="1" fill="#a8a8a8"/><rect x="3" y="15" width="1" height="1" fill="#a8a8a8"/></svg><svg style="left:13px;top:38px" width="24" height="24" viewBox="0 0 24 24"><rect x="2.5" y="1.5" width="19.5" height="20.5" rx="2" fill="#6a9ad0" stroke="#4b6fa3" stroke-width="1"/><rect x="5" y="2" width="14.5" height="9" fill="#ececec"/><path d="M7 4.5H17.5M7 6.5H17.5M7 8.5H17.5" stroke="#555" stroke-width="0.9"/><rect x="6" y="14" width="12.5" height="7.5" fill="#ececec" stroke="#555" stroke-width="0.5"/><rect x="7.5" y="15.5" width="2.8" height="4.5" fill="#23407a"/></svg><div style="position:absolute;left:45px;top:41px;width:1px;height:19px;background:#d3d2d0"></div><svg style="left:54px;top:38px" width="24" height="24" viewBox="0 0 24 24"><path d="M0.8 2.3 H16.6 L21.6 7.3 V21.6 H0.8 Z" fill="#fff" stroke="#6e6e6e" stroke-width="1.1" stroke-linejoin="round"/><path d="M16.6 2.3 V7.3 H21.6" fill="#fff" stroke="#6e6e6e" stroke-width="1.1" stroke-linejoin="round"/><path d="M3 4 H19 V20 H3 Z" fill="none" stroke="#a9c8f0" stroke-width="0.9"/><path d="M2.5 3 H11.5 V8.3 H6.8 V23.3 H2.5 Z" fill="#f5d75a" stroke="#cda90f" stroke-width="0.9"/><path d="M3 11H5M3 13H5M3 15H5M3 17H5M3 19H5M3 21H5" stroke="#9b6a18" stroke-width="0.8"/><g transform="translate(12,13)"><rect x="0" y="0" width="11" height="11" rx="2" fill="#c9a514"/><g stroke="#fff" stroke-width="1.5" stroke-linecap="round"><line x1="5.5" y1="5.5" x2="5.50" y2="1.30"/><line x1="5.5" y1="5.5" x2="1.86" y2="3.40"/><line x1="5.5" y1="5.5" x2="1.86" y2="7.60"/><line x1="5.5" y1="5.5" x2="5.50" y2="9.70"/><line x1="5.5" y1="5.5" x2="9.14" y2="7.60"/><line x1="5.5" y1="5.5" x2="9.14" y2="3.40"/></g><circle cx="5.5" cy="5.5" r="2.3" fill="#fff"/><circle cx="5.5" cy="5.5" r="1" fill="#c9a514"/></g></svg><svg style="left:86px;top:38px" width="24" height="24" viewBox="0 0 24 24"><rect x="0.7" y="2.5" width="19" height="19" rx="0.8" fill="#d6d6d6" stroke="#6e6e6e" stroke-width="1.1"/><path d="M3.6 0.6 H18.8 L23.3 5.1 V18.5 H3.6 Z" fill="#fff" stroke="#6e6e6e" stroke-width="1.1" stroke-linejoin="round"/><path d="M18.8 0.6 V5.1 H23.3" fill="#fff" stroke="#6e6e6e" stroke-width="1.1" stroke-linejoin="round"/><path d="M5.6 3 H19 V16.5 H5.6 Z" fill="none" stroke="#a9c8f0" stroke-width="0.9"/><g transform="translate(13,13)"><rect x="0" y="0" width="11" height="11" rx="2" fill="#c9a514"/><g stroke="#fff" stroke-width="1.5" stroke-linecap="round"><line x1="5.5" y1="5.5" x2="5.50" y2="1.30"/><line x1="5.5" y1="5.5" x2="1.86" y2="3.40"/><line x1="5.5" y1="5.5" x2="1.86" y2="7.60"/><line x1="5.5" y1="5.5" x2="5.50" y2="9.70"/><line x1="5.5" y1="5.5" x2="9.14" y2="7.60"/><line x1="5.5" y1="5.5" x2="9.14" y2="3.40"/></g><circle cx="5.5" cy="5.5" r="2.3" fill="#fff"/><circle cx="5.5" cy="5.5" r="1" fill="#c9a514"/></g></svg><svg style="left:119px;top:38px" width="24" height="24" viewBox="0 0 24 24"><path d="M1.3 2.3 H17.7 L22.7 7.3 V21.6 H1.3 Z" fill="#fff" stroke="#6e6e6e" stroke-width="1.1" stroke-linejoin="round"/><path d="M17.7 2.3 V7.3 H22.7" fill="#fff" stroke="#6e6e6e" stroke-width="1.1" stroke-linejoin="round"/><path d="M3 4.3 H19.5 V19.8 H3 Z" fill="none" stroke="#a9c8f0" stroke-width="0.9"/><path d="M14 14 L21.5 23" stroke="#3c3c3c" stroke-width="3.6" stroke-linecap="round"/><path d="M14 14 L21.5 23" stroke="#e9cf5c" stroke-width="2.2"/><path d="M8.6 6.4 A4.2 4.2 0 1 0 14.8 11.2" fill="none" stroke="#6a6a6a" stroke-width="3.2"/><path d="M8.6 6.4 A4.2 4.2 0 1 0 14.8 11.2" fill="none" stroke="#e6e6e6" stroke-width="1.7"/></svg><svg style="left:152px;top:38px" width="24" height="24" viewBox="0 0 24 24"><path d="M0.8 3.2 H7.5 L8.8 5.2 H19.5 V7.9 H0.8 Z" fill="#f2cf48" stroke="#d2ad25" stroke-width="0.8"/><path d="M0.8 7.9 H22.9 L20.4 20.6 H0.8 Z" fill="#f9d84f" stroke="#d2ad25" stroke-width="0.8" stroke-linejoin="round"/></svg><svg style="left:186px;top:38px" width="24" height="24" viewBox="0 0 24 24"><g transform="translate(-1.5,0)"><rect x="2.5" y="1.5" width="19.5" height="20.5" rx="2" fill="#6a9ad0" stroke="#4b6fa3" stroke-width="1"/><rect x="5" y="2" width="14.5" height="9" fill="#ececec"/><path d="M7 4.5H17.5M7 6.5H17.5M7 8.5H17.5" stroke="#555" stroke-width="0.9"/><rect x="6" y="14" width="12.5" height="7.5" fill="#ececec" stroke="#555" stroke-width="0.5"/><rect x="7.5" y="15.5" width="2.8" height="4.5" fill="#23407a"/></g><rect x="13" y="14" width="10" height="10" rx="2" fill="#5a9a5c"/><path d="M15.5 21.5 L20.8 16.2" stroke="#fff" stroke-width="1.8"/></svg><div style="position:absolute;left:218px;top:41px;width:1px;height:19px;background:#d3d2d0"></div><svg style="left:228px;top:38px" width="24" height="24" viewBox="0 0 24 24"><path d="M1.2 1.1 H11.8 L16.8 6.1 V23 H1.2 Z" fill="#fff" stroke="#6e6e6e" stroke-width="1.1" stroke-linejoin="round"/><path d="M11.8 1.1 V6.1 H16.8" fill="#fff" stroke="#6e6e6e" stroke-width="1.1" stroke-linejoin="round"/><g transform="translate(10,13)"><rect x="0" y="0" width="11" height="11" rx="2" fill="#c9a514"/><g stroke="#fff" stroke-width="1.5" stroke-linecap="round"><line x1="5.5" y1="5.5" x2="5.50" y2="1.30"/><line x1="5.5" y1="5.5" x2="1.86" y2="3.40"/><line x1="5.5" y1="5.5" x2="1.86" y2="7.60"/><line x1="5.5" y1="5.5" x2="5.50" y2="9.70"/><line x1="5.5" y1="5.5" x2="9.14" y2="7.60"/><line x1="5.5" y1="5.5" x2="9.14" y2="3.40"/></g><circle cx="5.5" cy="5.5" r="2.3" fill="#fff"/><circle cx="5.5" cy="5.5" r="1" fill="#c9a514"/></g></svg><div style="position:absolute;left:258px;top:41px;width:1px;height:19px;background:#d3d2d0"></div><svg style="left:265px;top:38px" width="24" height="24" viewBox="0 0 24 24"><rect x="7.2" y="2.2" width="9.6" height="6" rx="1" fill="#ececec" stroke="#777" stroke-width="1"/><rect x="2.2" y="6" width="19.7" height="10.6" rx="2.5" fill="#7aa7d8" stroke="#3d5a85" stroke-width="1"/><rect x="7.2" y="12.5" width="9.6" height="9.2" rx="0.8" fill="#fff" stroke="#777" stroke-width="1"/><path d="M9 15.5H15M9 17.5H15M9 19.5H15" stroke="#777" stroke-width="0.9"/></svg><svg style="left:299px;top:38px" width="24" height="24" viewBox="0 0 24 24"><path d="M0.6 0.6 H11.3 L15.8 5.1 V21.6 H0.6 Z" fill="#fff" stroke="#6e6e6e" stroke-width="1.1" stroke-linejoin="round"/><path d="M11.3 0.6 V5.1 H15.8" fill="#fff" stroke="#6e6e6e" stroke-width="1.1" stroke-linejoin="round"/><rect x="1" y="7.2" width="13.8" height="10.4" fill="#5aaaf0" stroke="#2c4a70" stroke-width="0.9"/><path d="M1.4 17.2 V12 Q5 9 7 10.5 Q11 11 14.5 13.5 V17.2 Z" fill="#d8b040"/><g transform="translate(12,13)"><rect x="0" y="0" width="11" height="11" rx="2" fill="#2c4a70"/><path d="M5 1.9 H1.2 V8.9 H5 V7.3 H2.9 V3.6 H5 Z" fill="#fff"/><path d="M3.6 4.9 H6.8 V2.9 L9.7 5.5 L6.8 8.1 V6.1 H3.6 Z" fill="#fff"/></g></svg><svg style="left:332px;top:38px" width="24" height="24" viewBox="0 0 24 24"><path d="M0.6 0.6 H11.3 L15.8 5.1 V21.6 H0.6 Z" fill="#fff" stroke="#6e6e6e" stroke-width="1.1" stroke-linejoin="round"/><path d="M11.3 0.6 V5.1 H15.8" fill="#fff" stroke="#6e6e6e" stroke-width="1.1" stroke-linejoin="round"/><g stroke="#f7931e" stroke-width="2.2" stroke-linecap="round"><line x1="7.8" y1="12.1" x2="7.80" y2="6.90"/><line x1="7.8" y1="12.1" x2="3.30" y2="9.50"/><line x1="7.8" y1="12.1" x2="3.30" y2="14.70"/><line x1="7.8" y1="12.1" x2="7.80" y2="17.30"/><line x1="7.8" y1="12.1" x2="12.30" y2="14.70"/><line x1="7.8" y1="12.1" x2="12.30" y2="9.50"/></g><g transform="translate(12,13)"><rect x="0" y="0" width="11" height="11" rx="2" fill="#2c4a70"/><path d="M5 1.9 H1.2 V8.9 H5 V7.3 H2.9 V3.6 H5 Z" fill="#fff"/><path d="M3.6 4.9 H6.8 V2.9 L9.7 5.5 L6.8 8.1 V6.1 H3.6 Z" fill="#fff"/></g></svg><svg style="left:365px;top:38px" width="24" height="24" viewBox="0 0 24 24"><path d="M0.6 0.6 H11.3 L15.8 5.1 V21.6 H0.6 Z" fill="#fff" stroke="#6e6e6e" stroke-width="1.1" stroke-linejoin="round"/><path d="M11.3 0.6 V5.1 H15.8" fill="#fff" stroke="#6e6e6e" stroke-width="1.1" stroke-linejoin="round"/><path d="M8 3.5 Q6.5 3.8 7 7.5 Q8 12 11.5 15 Q13.5 16.5 16 15.5 M7.8 8 Q6.5 14 2.8 19.5 Q2.2 20.5 3.5 20 Q8 16.5 15 15" fill="none" stroke="#e8423a" stroke-width="1.4" stroke-linecap="round"/><g transform="translate(12,13)"><rect x="0" y="0" width="11" height="11" rx="2" fill="#2c4a70"/><path d="M5 1.9 H1.2 V8.9 H5 V7.3 H2.9 V3.6 H5 Z" fill="#fff"/><path d="M3.6 4.9 H6.8 V2.9 L9.7 5.5 L6.8 8.1 V6.1 H3.6 Z" fill="#fff"/></g></svg><svg style="left:397px;top:38px" width="24" height="24" viewBox="0 0 24 24"><path d="M9.6 2.9 L2.9 10.6 L9.6 19 V14.2 Q15.6 13.2 15.4 16.3 Q15.2 18.5 12.8 20.8 Q21.2 20.5 21.2 14.3 Q21.2 7.2 9.6 7.6 Z" fill="#ee8a2c" stroke="#c9621c" stroke-width="0.9" stroke-linejoin="round"/></svg><svg style="left:430px;top:38px" width="24" height="24" viewBox="0 0 24 24"><g transform="translate(24,0) scale(-1,1)"><path d="M9.6 2.9 L2.9 10.6 L9.6 19 V14.2 Q15.6 13.2 15.4 16.3 Q15.2 18.5 12.8 20.8 Q21.2 20.5 21.2 14.3 Q21.2 7.2 9.6 7.6 Z" fill="#dedede" stroke="#d2d2d2" stroke-width="0.9" stroke-linejoin="round"/></g></svg><svg style="left:467px;top:42px" width="5" height="17" viewBox="0 0 5 17"><rect x="0" y="0" width="1" height="1" fill="#a8a8a8"/><rect x="0" y="3" width="1" height="1" fill="#a8a8a8"/><rect x="0" y="6" width="1" height="1" fill="#a8a8a8"/><rect x="0" y="9" width="1" height="1" fill="#a8a8a8"/><rect x="0" y="12" width="1" height="1" fill="#a8a8a8"/><rect x="0" y="15" width="1" height="1" fill="#a8a8a8"/><rect x="3" y="0" width="1" height="1" fill="#a8a8a8"/><rect x="3" y="3" width="1" height="1" fill="#a8a8a8"/><rect x="3" y="6" width="1" height="1" fill="#a8a8a8"/><rect x="3" y="9" width="1" height="1" fill="#a8a8a8"/><rect x="3" y="12" width="1" height="1" fill="#a8a8a8"/><rect x="3" y="15" width="1" height="1" fill="#a8a8a8"/></svg><svg style="left:479px;top:38px" width="24" height="24" viewBox="0 0 24 24"><rect x="0.6" y="3.1" width="23" height="17.9" rx="3" fill="#e6e6e6" stroke="#c8c8c8" stroke-width="1"/><path d="M8 3.5V20.5M16 3.5V20.5M1 9H23M1 15H23" stroke="#f6f6f6" stroke-width="0.8"/><path d="M3 6 Q6 5 7 7 L6 10 L8 13 L5 12 Z M10 7 L14 6 L13 11 L11 14 Z M16 6 L21 6 L20 9 L17 9 Z" fill="#cfcfcf"/></svg><svg style="left:512px;top:38px" width="24" height="24" viewBox="0 0 24 24"><rect x="2.4" y="1.7" width="2.5" height="20.3" rx="1" fill="#dcdcdc" stroke="#cccccc" stroke-width="0.6"/><path d="M5.3 12 L14.5 2.4 V8.1 H21.7 V15.6 H14.5 V21.7 Z" fill="#dcdcdc" stroke="#cccccc" stroke-width="0.8" stroke-linejoin="round"/></svg><svg style="left:546px;top:38px" width="24" height="24" viewBox="0 0 24 24"><path d="M3 12 L12.6 2.4 V8.1 H19.4 V15.6 H12.6 V21.7 Z" fill="#dcdcdc" stroke="#cccccc" stroke-width="0.8" stroke-linejoin="round"/></svg><div style="position:absolute;left:574px;top:35px;width:78px;height:30px;box-sizing:border-box;border:1px solid #b9b8b6;border-radius:3px;background:#fff"></div><div style="position:absolute;left:631px;top:36px;width:1px;height:28px;background:#c8c7c5"></div><div style="position:absolute;left:632px;top:36px;width:19px;height:28px;background:linear-gradient(#fbfbfa,#f1f0ee);border-radius:0 2px 2px 0"></div><svg style="left:637px;top:49px" width="8" height="4"><path d="M0 0.2 H6 L3 3.2 Z" fill="#a6a6a6"/></svg><div class="t" style="left:578px;top:44.85px;font-size:14px;color:#858585">3</div><svg style="left:657px;top:38px" width="24" height="24" viewBox="0 0 24 24"><path d="M19.9 12 L10.5 2.2 V8.2 H3.4 V15.6 H10.5 V21.7 Z" fill="#dcdcdc" stroke="#cccccc" stroke-width="0.8" stroke-linejoin="round"/></svg><svg style="left:690px;top:38px" width="24" height="24" viewBox="0 0 24 24"><path d="M18 12 L9.1 2.2 V8.2 H2.2 V15.6 H9.1 V21.7 Z" fill="#dcdcdc" stroke="#cccccc" stroke-width="0.8" stroke-linejoin="round"/><rect x="19" y="1.4" width="2.6" height="20.8" rx="1" fill="#dcdcdc" stroke="#cccccc" stroke-width="0.6"/></svg><svg style="left:723px;top:38px" width="24" height="24" viewBox="0 0 24 24"><rect x="7.2" y="2.2" width="9.6" height="6" rx="1" fill="#ececec" stroke="#d8d8d8" stroke-width="1"/><rect x="2.2" y="6" width="19.7" height="10.6" rx="2.5" fill="#dcdcdc" stroke="#cfcfcf" stroke-width="1"/><rect x="7.2" y="12.5" width="9.6" height="9.2" rx="0.8" fill="#fff" stroke="#d8d8d8" stroke-width="1"/><path d="M9 15.5H15M9 17.5H15M9 19.5H15" stroke="#d8d8d8" stroke-width="0.9"/></svg><svg style="left:757px;top:38px" width="24" height="24" viewBox="0 0 24 24"><path d="M0.6 0.6 H10.7 L15.2 5.1 V21.6 H0.6 Z" fill="#fff" stroke="#d6d6d6" stroke-width="1.1" stroke-linejoin="round"/><path d="M10.7 0.6 V5.1 H15.2" fill="#fff" stroke="#d6d6d6" stroke-width="1.1" stroke-linejoin="round"/><rect x="1" y="7.2" width="13.5" height="10.4" fill="#d4d4d4"/><path d="M2 9H14M2 11H14" stroke="#e6e6e6" stroke-width="0.6"/><g transform="translate(12.4,13.2)"><rect x="0" y="0" width="11" height="11" rx="2" fill="#cdcdcd"/><path d="M5 1.9 H1.2 V8.9 H5 V7.3 H2.9 V3.6 H5 Z" fill="#f4f4f4"/><path d="M3.6 4.9 H6.8 V2.9 L9.7 5.5 L6.8 8.1 V6.1 H3.6 Z" fill="#f4f4f4"/></g></svg><svg style="left:786px;top:48px" width="8" height="4"><path d="M0 0.2 H6 L3 3.2 Z" fill="#a6a6a6"/></svg><svg style="left:801px;top:38px" width="24" height="24" viewBox="0 0 24 24"><rect x="0.5" y="1.3" width="19.4" height="15.4" rx="2.5" fill="#b7d2f0" stroke="#6b8fc0" stroke-width="1"/><path d="M7 1.5V16.5M13.5 1.5V16.5M1 6.5H19.5M1 11.5H19.5" stroke="#e8f2fc" stroke-width="0.8"/><path d="M3 4 L6 4 L5 8 L3 7 Z M9 4 L12 5 L11 9 Z M15 3 L18 4 L17 7 Z" fill="#4d78b0"/><path d="M14 12 L23.5 23.5" stroke="#3c3c3c" stroke-width="3.6" stroke-linecap="round"/><path d="M14 12 L23.5 23.5" stroke="#e9cf5c" stroke-width="2.2"/><path d="M9.2 4.6 A4.3 4.3 0 1 0 15.6 9.4" fill="none" stroke="#3a3a3a" stroke-width="3.4"/><path d="M9.2 4.6 A4.3 4.3 0 1 0 15.6 9.4" fill="none" stroke="#e2e2e2" stroke-width="1.8"/></svg><svg style="left:838px;top:42px" width="5" height="17" viewBox="0 0 5 17"><rect x="0" y="0" width="1" height="1" fill="#a8a8a8"/><rect x="0" y="3" width="1" height="1" fill="#a8a8a8"/><rect x="0" y="6" width="1" height="1" fill="#a8a8a8"/><rect x="0" y="9" width="1" height="1" fill="#a8a8a8"/><rect x="0" y="12" width="1" height="1" fill="#a8a8a8"/><rect x="0" y="15" width="1" height="1" fill="#a8a8a8"/><rect x="3" y="0" width="1" height="1" fill="#a8a8a8"/><rect x="3" y="3" width="1" height="1" fill="#a8a8a8"/><rect x="3" y="6" width="1" height="1" fill="#a8a8a8"/><rect x="3" y="9" width="1" height="1" fill="#a8a8a8"/><rect x="3" y="12" width="1" height="1" fill="#a8a8a8"/><rect x="3" y="15" width="1" height="1" fill="#a8a8a8"/></svg><svg style="left:850px;top:38px" width="24" height="24" viewBox="0 0 24 24"><path d="M8.3 15.1 L1.2 22.8" stroke="#111" stroke-width="4" stroke-linecap="butt"/><path d="M6.700000000000001 16.7 L1.5 22.5" stroke="#f5d816" stroke-width="2.4"/><circle cx="8.3" cy="15.1" r="1.9" fill="#000"/><circle cx="14.3" cy="9.1" r="8.2" fill="#ebebeb" stroke="#4a4a4a" stroke-width="1"/><path d="M8.8 9.1 H19.8 M14.3 3.6 V14.6" stroke="#3d6aa6" stroke-width="3"/><path d="M9.3 9.1 H19.3 M14.3 4.1 V14.1" stroke="#5f93d0" stroke-width="2"/></svg><svg style="left:883px;top:38px" width="24" height="24" viewBox="0 0 24 24"><path d="M8.4 15.1 L1.2 22.8" stroke="#111" stroke-width="4" stroke-linecap="butt"/><path d="M6.800000000000001 16.7 L1.5 22.5" stroke="#f5d816" stroke-width="2.4"/><circle cx="8.4" cy="15.1" r="1.9" fill="#000"/><circle cx="14.4" cy="9.1" r="8.2" fill="#ebebeb" stroke="#4a4a4a" stroke-width="1"/><path d="M9.5 9.1 H19.3" stroke="#3d6aa6" stroke-width="3" stroke-linecap="round"/><path d="M9.8 9.1 H19" stroke="#5f93d0" stroke-width="1.8" stroke-linecap="round"/></svg><svg style="left:916px;top:38px" width="24" height="24" viewBox="0 0 24 24"><rect x="1.8" y="0.6" width="8" height="13" fill="#e6e6e6" stroke="#999" stroke-width="0.8"/><path d="M8.7 15.1 L1.2 22.8" stroke="#111" stroke-width="4" stroke-linecap="butt"/><path d="M7.1 16.7 L1.5 22.5" stroke="#f5d816" stroke-width="2.4"/><circle cx="8.7" cy="15.1" r="1.9" fill="#000"/><circle cx="14.7" cy="9.1" r="8.2" fill="#ebebeb" stroke="#4a4a4a" stroke-width="1"/><path d="M10.4 6.5 L12.2 5 V13.3 M18 6.5 L19.8 5 V13.3" fill="none" stroke="#222" stroke-width="1.8"/><rect x="14.3" y="7" width="1.8" height="1.8" fill="#222"/><rect x="14.3" y="11" width="1.8" height="1.8" fill="#222"/></svg><svg style="left:949px;top:38px" width="24" height="24" viewBox="0 0 24 24"><path d="M8.5 15.3 L1.2 22.8" stroke="#111" stroke-width="4" stroke-linecap="butt"/><path d="M6.9 16.9 L1.5 22.5" stroke="#f5d816" stroke-width="2.4"/><circle cx="8.5" cy="15.3" r="1.9" fill="#000"/><circle cx="14.5" cy="9.3" r="8.1" fill="#ebebeb" stroke="#4a4a4a" stroke-width="1"/><g fill="#6a9ad0" stroke="#2d4f80" stroke-width="0.9" stroke-linejoin="miter"><path d="M4 0.4 H11.8 L9.5 3.2 L11.8 5.9 L9.5 8.5 L6.6 5.6 L4 8.2 Z"/><path d="M23.6 0.4 H15.8 L18.1 3.2 L15.8 5.9 L18.1 8.5 L21 5.6 L23.6 8.2 Z"/><path d="M23.6 19.8 H15.8 L18.1 17.4 L15.5 14.5 L18.4 11.9 L20.8 14.3 L23.6 11.6 Z"/></g></svg><svg style="left:982px;top:38px" width="24" height="24" viewBox="0 0 24 24"><defs><linearGradient id="rg" x1="0" y1="0" x2="0" y2="1"><stop offset="0" stop-color="#7aaae0"/><stop offset="1" stop-color="#3f7cc8"/></linearGradient></defs><path d="M2.2 10.6 Q3.5 1 11 0.9 Q15.5 1 18.2 3.8 L21.9 1.9 V11.6 H13.2 L15.8 8.5 Q13 5.9 10.6 5.9 Q6.5 6 5 9.5 Z" fill="url(#rg)" stroke="#3a70b0" stroke-width="0.5"/><path d="M21.6 13.2 Q20.5 22.9 13 22.9 Q8.5 22.8 6.7 20 L2.2 21.6 V12.2 H10.1 L7.7 15.8 Q10 17.9 13 17.9 Q17 17.8 18.7 14 Z" fill="url(#rg)" stroke="#3a70b0" stroke-width="0.5"/></svg><svg style="left:1019px;top:42px" width="5" height="17" viewBox="0 0 5 17"><rect x="0" y="0" width="1" height="1" fill="#a8a8a8"/><rect x="0" y="3" width="1" height="1" fill="#a8a8a8"/><rect x="0" y="6" width="1" height="1" fill="#a8a8a8"/><rect x="0" y="9" width="1" height="1" fill="#a8a8a8"/><rect x="0" y="12" width="1" height="1" fill="#a8a8a8"/><rect x="0" y="15" width="1" height="1" fill="#a8a8a8"/><rect x="3" y="0" width="1" height="1" fill="#a8a8a8"/><rect x="3" y="3" width="1" height="1" fill="#a8a8a8"/><rect x="3" y="6" width="1" height="1" fill="#a8a8a8"/><rect x="3" y="9" width="1" height="1" fill="#a8a8a8"/><rect x="3" y="12" width="1" height="1" fill="#a8a8a8"/><rect x="3" y="15" width="1" height="1" fill="#a8a8a8"/></svg><svg style="left:1032px;top:38px" width="24" height="24" viewBox="0 0 24 24"><rect x="1" y="3.1" width="13" height="11.6" rx="0.8" fill="#c6e2f7" stroke="#4f7aa8" stroke-width="1"/><path d="M9.2 13.5 V8.5 A5.2 5.2 0 0 1 19.6 8.5 V13.5" fill="none" stroke="#8a8a8a" stroke-width="2.6"/><path d="M9.2 13.5 V8.5 A5.2 5.2 0 0 1 19.6 8.5 V13.5" fill="none" stroke="#d6d6d6" stroke-width="1.2"/><rect x="7" y="13.4" width="14.9" height="9.4" rx="1.2" fill="#f2d816" stroke="#c7a600" stroke-width="1"/></svg><svg style="left:1065px;top:38px" width="24" height="24" viewBox="0 0 24 24"><rect x="1.4" y="6.3" width="8" height="11.1" rx="0.8" fill="#c6e2f7" stroke="#4f7aa8" stroke-width="1"/><circle cx="13.9" cy="7.6" r="5.6" fill="#c6e2f7" stroke="#4f7aa8" stroke-width="1"/><path d="M17.6 13.5 V8.5 A3.8 3.8 0 1 0 10.5 6.6" fill="none" stroke="#8a8a8a" stroke-width="2.6"/><path d="M17.6 13.5 V8.5 A3.8 3.8 0 1 0 10.5 6.6" fill="none" stroke="#d6d6d6" stroke-width="1.2"/><rect x="7" y="13.4" width="14.9" height="9.4" rx="1.2" fill="#f2d816" stroke="#c7a600" stroke-width="1"/></svg><svg style="left:1098px;top:38px" width="24" height="24" viewBox="0 0 24 24"><rect x="3.4" y="9.8" width="9.4" height="9.6" rx="0.8" fill="#c6e2f7" stroke="#4f7aa8" stroke-width="1"/><circle cx="13.5" cy="9.4" r="6" fill="#c6e2f7" stroke="#4f7aa8" stroke-width="1"/><rect x="0.7" y="1.5000000000000002" width="2.4" height="2.4" fill="#111"/><rect x="18.900000000000002" y="1.5000000000000002" width="2.4" height="2.4" fill="#111"/><rect x="0.7" y="19.8" width="2.4" height="2.4" fill="#111"/><rect x="18.900000000000002" y="19.8" width="2.4" height="2.4" fill="#111"/></svg><svg style="left:1130px;top:38px" width="24" height="24" viewBox="0 0 24 24"><rect x="2.9" y="8.9" width="9.6" height="11" rx="0.8" fill="#f2e6a0" stroke="#888" stroke-width="1"/><circle cx="14.4" cy="9.4" r="6" fill="#c6e2f7" stroke="#4f7aa8" stroke-width="1"/><rect x="6.6" y="1.5000000000000002" width="2.4" height="2.4" fill="#111"/><rect x="19.900000000000002" y="1.5000000000000002" width="2.4" height="2.4" fill="#111"/><rect x="1.7" y="7.7" width="2.4" height="2.4" fill="#111"/><rect x="19.900000000000002" y="14.600000000000001" width="2.4" height="2.4" fill="#111"/><rect x="6.6" y="14.600000000000001" width="2.4" height="2.4" fill="#111"/><rect x="1.7" y="19.8" width="2.4" height="2.4" fill="#111"/><rect x="13.200000000000001" y="19.8" width="2.4" height="2.4" fill="#111"/></svg><svg style="left:1164px;top:38px" width="24" height="24" viewBox="0 0 24 24"><rect x="1.2" y="10.3" width="15.5" height="11.6" fill="#c6e2f7" stroke="#6d94c0" stroke-width="0.9"/><rect x="5.4" y="2.2" width="15.4" height="11.2" fill="#f2e6a0" stroke="#8a8a8a" stroke-width="1"/></svg><svg style="left:1183px;top:59px" width="8" height="4"><path d="M0 0.2 H6 L3 3.2 Z" fill="#a6a6a6"/></svg><svg style="left:1197px;top:38px" width="24" height="24" viewBox="0 0 24 24"><path d="M1.5 1.2 V22.8" stroke="#333" stroke-width="1.2"/><rect x="2" y="2.4" width="9.6" height="7.9" rx="0.8" fill="#ccf5c6" stroke="#77b070" stroke-width="0.9"/><rect x="2" y="12.2" width="13.6" height="9.7" fill="#c6e2f7" stroke="#6d94c0" stroke-width="0.9"/></svg><svg style="left:1216px;top:59px" width="8" height="4"><path d="M0 0.2 H6 L3 3.2 Z" fill="#a6a6a6"/></svg><svg style="left:1230px;top:38px" width="24" height="24" viewBox="0 0 24 24"><path d="M0.5 2 V9.8 M9.4 2 V9.8 M18.5 2 V9.8" stroke="#333" stroke-width="1"/><rect x="0.5" y="7.3" width="4.2" height="10.3" rx="0.8" fill="#ccf5c6" stroke="#77b070" stroke-width="0.9"/><rect x="9.4" y="7.3" width="6.4" height="14.6" rx="0.8" fill="#c6e2f7" stroke="#6d94c0" stroke-width="0.9"/><rect x="18.5" y="7.3" width="4.3" height="8.3" rx="0.8" fill="#ccf5c6" stroke="#77b070" stroke-width="0.9"/></svg><svg style="left:1249px;top:59px" width="8" height="4"><path d="M0 0.2 H6 L3 3.2 Z" fill="#a6a6a6"/></svg><svg style="left:1263px;top:38px" width="24" height="24" viewBox="0 0 24 24"><rect x="1.4" y="2.2" width="11.6" height="19.7" fill="#c6e2f7" stroke="#6d94c0" stroke-width="0.9"/><path d="M1.8 12 H5.5 M3.8 10 L5.8 12 L3.8 14 M12.6 12 H8.9 M10.6 10 L8.6 12 L10.6 14" fill="none" stroke="#555" stroke-width="1"/><rect x="15.5" y="2.4" width="5.3" height="19.1" fill="#f2e6a0" stroke="#8a8a8a" stroke-width="1"/></svg><svg style="left:1282px;top:59px" width="8" height="4"><path d="M0 0.2 H6 L3 3.2 Z" fill="#a6a6a6"/></svg>
<svg style="left:9px;top:75px" width="17" height="5" viewBox="0 0 17 5"><rect x="0" y="0" width="1" height="1" fill="#a8a8a8"/><rect x="0" y="3" width="1" height="1" fill="#a8a8a8"/><rect x="3" y="0" width="1" height="1" fill="#a8a8a8"/><rect x="3" y="3" width="1" height="1" fill="#a8a8a8"/><rect x="6" y="0" width="1" height="1" fill="#a8a8a8"/><rect x="6" y="3" width="1" height="1" fill="#a8a8a8"/><rect x="9" y="0" width="1" height="1" fill="#a8a8a8"/><rect x="9" y="3" width="1" height="1" fill="#a8a8a8"/><rect x="12" y="0" width="1" height="1" fill="#a8a8a8"/><rect x="12" y="3" width="1" height="1" fill="#a8a8a8"/><rect x="15" y="0" width="1" height="1" fill="#a8a8a8"/><rect x="15" y="3" width="1" height="1" fill="#a8a8a8"/></svg><div style="position:absolute;left:1px;top:147px;width:31px;height:31px;box-sizing:border-box;border:1px solid #c6c5c3;border-radius:3px;background:#dddcda"></div><svg style="left:4px;top:86px" width="24" height="24" viewBox="0 0 24 24"><path d="M10.3 23.5 L4.2 15 Q2.8 12.6 4.2 11.3 Q5.6 10.2 7.2 11.8 L9.3 14 V3 Q9.3 0.6 11 0.6 Q12.7 0.6 12.7 3 V9.5 V3.5 Q12.7 1.8 14.3 1.8 Q15.9 1.8 15.9 3.5 V10 V5 Q15.9 3.4 17.4 3.4 Q18.9 3.4 18.9 5 V10.5 V7 Q18.9 5.4 20.2 5.4 Q21.5 5.4 21.5 7 V15.5 L19.4 23.5 Z" fill="#fff" stroke="#111" stroke-width="1.2" stroke-linejoin="round"/></svg><svg style="left:4px;top:118px" width="24" height="24" viewBox="0 0 24 24"><path d="M1 15 V3.5 Q1 2 2.5 2 H9" fill="none" stroke="#111" stroke-width="1.2" stroke-dasharray="1.6 1.6"/><path d="M1.5 15 H7" fill="none" stroke="#111" stroke-width="1.2" stroke-dasharray="1.6 1.6"/><path d="M8.5 15.5 L1 23" stroke="#111" stroke-width="3.6"/><path d="M7 17 L1.4 22.6" stroke="#f2d21e" stroke-width="2.2"/><circle cx="15" cy="9.3" r="8.2" fill="#ececec" stroke="#555" stroke-width="0.9"/></svg><svg style="left:4px;top:150px" width="24" height="24" viewBox="0 0 24 24"><path d="M4.5 4.5 H19 V18.5" fill="none" stroke="#444" stroke-width="1" stroke-dasharray="1 2"/><path d="M3.8 5 V18.5 H10" fill="none" stroke="#444" stroke-width="1" stroke-dasharray="1 2"/><rect x="2.5" y="3.2" width="2.6" height="2.6" fill="#fff" stroke="#333" stroke-width="0.8"/><rect x="16.8" y="3.2" width="2.6" height="2.6" fill="#fff" stroke="#333" stroke-width="0.8"/><rect x="2.5" y="17.2" width="2.6" height="2.6" fill="#fff" stroke="#333" stroke-width="0.8"/><rect x="16.8" y="17.2" width="2.6" height="2.6" fill="#fff" stroke="#333" stroke-width="0.8"/><path d="M5.5 3 L7.6 19.2 L11.2 15.5 L14.5 21.8 L17.5 20 L14.4 13.8 L19.4 13 Z" fill="#fff" stroke="#111" stroke-width="1.1" stroke-linejoin="round"/></svg><svg style="left:4px;top:182px" width="24" height="24" viewBox="0 0 24 24"><path d="M6.3 2.5 H21.8 V22 H4.3 Q2.3 22 2.3 20 V3.0 Q2.3 1.5 4.3 1.5 Q6.3 1.5 6.3 3.0" fill="#e4e4e4" stroke="#8c8c8c" stroke-width="1"/><path d="M6.3 3.0 V20 H4.3 Q2.3 20 2.3 22" fill="none" stroke="#8c8c8c" stroke-width="0.8"/><rect x="2.9" y="2.5" width="2.8" height="16.5" fill="#f2f2f2"/><path d="M14.5 3.5 L10.5 7.8 H13 V10.5 H16 V7.8 H18.5 Z" fill="#5b8dc8" stroke="#2f5587" stroke-width="0.6"/><path d="M6.5 11.5 V17.5 L9.5 14.5 Z M10 13 H13 V16 H10 Z" fill="#5b8dc8" stroke="#2f5587" stroke-width="0.6"/><rect x="18.5" y="13" width="3" height="3" fill="#5b8dc8" stroke="#2f5587" stroke-width="0.6"/><rect x="13" y="19" width="3" height="3" fill="#5b8dc8" stroke="#2f5587" stroke-width="0.6"/></svg><svg style="left:4px;top:214px" width="24" height="24" viewBox="0 0 24 24"><path d="M3.4 20 L8.4 3 L20.5 8.7" fill="none" stroke="#111" stroke-width="1.1"/><path d="M9.5 22 L21 13" stroke="#c89a20" stroke-width="2.6"/><path d="M10.5 14.5 L21.5 21.5" stroke="#c89a20" stroke-width="2.6"/><path d="M11 16.5 L16 12" stroke="#aaa" stroke-width="2.5"/><path d="M9.5 22 L14.5 17.5" stroke="#f2d21e" stroke-width="2.6"/><circle cx="8.4" cy="3" r="2.6" fill="#2f80ed"/><circle cx="20.5" cy="8.7" r="2.6" fill="#2f80ed"/><circle cx="3.4" cy="20" r="2.6" fill="#2f80ed"/></svg><svg style="left:4px;top:246px" width="24" height="24" viewBox="0 0 24 24"><path d="M6.3 2 H21.8 V21.5 H4.3 Q2.3 21.5 2.3 19.5 V2.5 Q2.3 1 4.3 1 Q6.3 1 6.3 2.5" fill="#e2e2e2" stroke="#8c8c8c" stroke-width="1"/><path d="M6.3 2.5 V19.5 H4.3 Q2.3 19.5 2.3 21.5" fill="none" stroke="#8c8c8c" stroke-width="0.8"/><rect x="2.9" y="2" width="2.8" height="16.5" fill="#f2f2f2"/><g transform="translate(15.2,14.5)"><rect x="0" y="0" width="8.8" height="8.8" rx="1.8" fill="#55935a"/><path d="M4.4 1.6 V7.2 M1.6 4.4 H7.2" stroke="#fff" stroke-width="1.8"/></g></svg><svg style="left:4px;top:280.5px" width="24" height="24" viewBox="0 0 24 24"><rect x="2.3" y="2.7" width="19.5" height="13.2" fill="#5aaaf0" stroke="#777" stroke-width="1"/><path d="M2.8 15.4 V9.5 Q6 6 9 7 Q14 9 21.3 12 V15.4 Z" fill="#d8b040"/><path d="M2.8 13 H21.3 V15.4 H2.8 Z" fill="#c19a30"/><g transform="translate(15.2,12.5)"><rect x="0" y="0" width="8.8" height="8.8" rx="1.8" fill="#55935a"/><path d="M4.4 1.6 V7.2 M1.6 4.4 H7.2" stroke="#fff" stroke-width="1.8"/></g></svg><svg style="left:4px;top:312.5px" width="24" height="24" viewBox="0 0 24 24"><rect x="2.3" y="3.2" width="19.5" height="13.5" fill="#efefef" stroke="#888" stroke-width="1"/><path d="M8 6.8 Q8 5.8 9 5.8 H16 Q17 5.8 17 6.8 M12.5 5.8 V14" fill="none" stroke="#222" stroke-width="1.2"/><g transform="translate(15.2,13.1)"><rect x="0" y="0" width="8.8" height="8.8" rx="1.8" fill="#55935a"/><path d="M4.4 1.6 V7.2 M1.6 4.4 H7.2" stroke="#fff" stroke-width="1.8"/></g></svg><svg style="left:4px;top:343.8px" width="24" height="24" viewBox="0 0 24 24"><rect x="3.5" y="1.5" width="4" height="4" fill="#f2e030" stroke="#f39c12" stroke-width="1"/><rect x="3.5" y="7.5" width="4" height="4" fill="#e01010" stroke="#a04010" stroke-width="1"/><rect x="3.5" y="13.5" width="4" height="4" fill="#10a050" stroke="#1a3060" stroke-width="1"/><path d="M9 5H15M9 11H18M9 17H13" stroke="#999" stroke-width="1.4"/><g transform="translate(15.2,12.7)"><rect x="0" y="0" width="8.8" height="8.8" rx="1.8" fill="#55935a"/><path d="M4.4 1.6 V7.2 M1.6 4.4 H7.2" stroke="#fff" stroke-width="1.8"/></g></svg><svg style="left:4px;top:374px" width="24" height="24" viewBox="0 0 24 24"><rect x="1.7" y="9.2" width="21" height="3.4" rx="1" fill="#999" stroke="#3a3a3a" stroke-width="1.1"/><path d="M6.5 10.9H10M13.5 10.9H17" stroke="#fff" stroke-width="1.5" stroke-linecap="round"/><g transform="translate(15.2,15)"><rect x="0" y="0" width="8.8" height="8.8" rx="1.8" fill="#55935a"/><path d="M4.4 1.6 V7.2 M1.6 4.4 H7.2" stroke="#fff" stroke-width="1.8"/></g></svg><svg style="left:4px;top:407px" width="24" height="24" viewBox="0 0 24 24"><path d="M12 0.5 L3 21.5 L12 15 L16 17 Z" fill="#4b75b0" stroke="#34558a" stroke-width="0.7"/><text x="11" y="13" font-family="Liberation Sans" font-weight="bold" font-size="7" fill="#fff" text-anchor="middle">N</text><g transform="translate(14.8,14)"><rect x="0" y="0" width="8.8" height="8.8" rx="1.8" fill="#55935a"/><path d="M4.4 1.6 V7.2 M1.6 4.4 H7.2" stroke="#fff" stroke-width="1.8"/></g></svg><svg style="left:4px;top:439px" width="24" height="24" viewBox="0 0 24 24"><rect x="2" y="10.5" width="13" height="8.5" fill="#c6e2f7" stroke="#6d94c0" stroke-width="0.8"/><circle cx="16" cy="13" r="5.2" fill="#f5b5b5" stroke="#e08080" stroke-width="0.8"/><path d="M9 1 L3.5 11 H14.5 Z" fill="#c8f0c0" stroke="#70b060" stroke-width="0.8"/><g transform="translate(15.2,14.3)"><rect x="0" y="0" width="8.8" height="8.8" rx="1.8" fill="#55935a"/><path d="M4.4 1.6 V7.2 M1.6 4.4 H7.2" stroke="#fff" stroke-width="1.8"/></g><path d="M24 21.5 L22 23.5 H24 Z" fill="#888"/></svg><svg style="left:4px;top:471px" width="24" height="24" viewBox="0 0 24 24"><path d="M11.50 2.00 L14.03 8.02 L20.54 8.56 L15.59 12.83 L17.08 19.19 L11.50 15.80 L5.92 19.19 L7.41 12.83 L2.46 8.56 L8.97 8.02 Z" fill="#fbe3a8" stroke="#e0a650" stroke-width="0.9" stroke-linejoin="round"/><g transform="translate(15.2,14.3)"><rect x="0" y="0" width="8.8" height="8.8" rx="1.8" fill="#55935a"/><path d="M4.4 1.6 V7.2 M1.6 4.4 H7.2" stroke="#fff" stroke-width="1.8"/></g></svg><svg style="left:4px;top:503px" width="24" height="24" viewBox="0 0 24 24"><path d="M3 20 L19 5" stroke="#333" stroke-width="1"/><rect x="2" y="19" width="2.2" height="2.2" fill="#333"/><path d="M22.5 1.5 L14.5 4 L20 9.5 Z" fill="#fff" stroke="#333" stroke-width="1" stroke-linejoin="round"/><g transform="translate(15.2,14.3)"><rect x="0" y="0" width="8.8" height="8.8" rx="1.8" fill="#55935a"/><path d="M4.4 1.6 V7.2 M1.6 4.4 H7.2" stroke="#fff" stroke-width="1.8"/></g></svg><svg style="left:4px;top:535px" width="24" height="24" viewBox="0 0 24 24"><path d="M3.5 19.2 L8.2 2.2 L20.3 7.8" fill="none" stroke="#111" stroke-width="1.1"/><path d="M20.3 7.8 L3.5 19.2" fill="none" stroke="#111" stroke-width="1.1" stroke-dasharray="1.3 1.3"/><circle cx="8.2" cy="2.2" r="2.6" fill="#2f80ed"/><circle cx="20.3" cy="7.8" r="2.6" fill="#2f80ed"/><circle cx="3.5" cy="19.2" r="2.6" fill="#2f80ed"/><g transform="translate(15.2,14.3)"><rect x="0" y="0" width="8.8" height="8.8" rx="1.8" fill="#55935a"/><path d="M4.4 1.6 V7.2 M1.6 4.4 H7.2" stroke="#fff" stroke-width="1.8"/></g><path d="M24 22 L22.5 23.5 H24 Z" fill="#888"/></svg><svg style="left:4px;top:567px" width="24" height="24" viewBox="0 0 24 24"><rect x="2.2" y="2" width="19.5" height="18" fill="#f2f2f2" stroke="#888" stroke-width="1"/><path d="M4.5 6H9M4.5 9H9M4.5 12H13M4.5 15H13" stroke="#5b8dc8" stroke-width="1.6"/><path d="M12 5 L10 8 L12 11 M16 4 L14 12 M18 5 L20 8 L18 11" fill="none" stroke="#222" stroke-width="1"/><g transform="translate(15.2,14.3)"><rect x="0" y="0" width="8.8" height="8.8" rx="1.8" fill="#55935a"/><path d="M4.4 1.6 V7.2 M1.6 4.4 H7.2" stroke="#fff" stroke-width="1.8"/></g></svg><svg style="left:4px;top:599px" width="24" height="24" viewBox="0 0 24 24"><rect x="2.2" y="2" width="19.5" height="18.5" fill="#eef4fb" stroke="#6d94c0" stroke-width="1"/><rect x="2.2" y="2" width="19.5" height="4" fill="#6d9bd0"/><path d="M5 4H9M12 4H19" stroke="#eef4fb" stroke-width="1"/><path d="M4 9H8M10 9H19M4 12H8M10 12H19M4 15H8M10 15H15M4 18H8" stroke="#6d9bd0" stroke-width="1.2"/><g transform="translate(15.2,14.3)"><rect x="0" y="0" width="8.8" height="8.8" rx="1.8" fill="#55935a"/><path d="M4.4 1.6 V7.2 M1.6 4.4 H7.2" stroke="#fff" stroke-width="1.8"/></g></svg><svg style="left:4px;top:631px" width="24" height="24" viewBox="0 0 24 24"><rect x="2.2" y="3" width="19.5" height="18.5" fill="#ececec" stroke="#6d94c0" stroke-width="1"/><rect x="2.2" y="3" width="19.5" height="3.5" fill="#6d9bd0"/><path d="M4 10H12M4 13H10M4 16H12" stroke="#999" stroke-width="1"/><path d="M19.5 1 L11 15.5 L10 19 L13 17 L21.5 2.5 Z" fill="#f0b040" stroke="#a06a20" stroke-width="0.8"/><g transform="translate(15.2,14.3)"><rect x="0" y="0" width="8.8" height="8.8" rx="1.8" fill="#55935a"/><path d="M4.4 1.6 V7.2 M1.6 4.4 H7.2" stroke="#fff" stroke-width="1.8"/></g></svg><svg style="left:4px;top:663px" width="24" height="24" viewBox="0 0 24 24"><path d="M1 18 L6.5 5 Q14 3 22 5.5 L20.5 17.5 Q12 14.5 1 18 Z" fill="#d6d6d6" stroke="#b0b0b0" stroke-width="0.9"/><path d="M4 11 Q12 9 21 11 M9 5 L7 16 M15 4.5 L14 15.5" fill="none" stroke="#f2f2f2" stroke-width="0.8"/><g transform="translate(15.2,14.3)"><rect x="0" y="0" width="8.8" height="8.8" rx="1.8" fill="#55935a"/><path d="M4.4 1.6 V7.2 M1.6 4.4 H7.2" stroke="#fff" stroke-width="1.8"/></g></svg>
<svg style="left:361px;top:25px" width="14" height="20" viewBox="0 0 14 20"><path d="M1 1 L1 16 L4.5 12.5 L7 18 L9.5 17 L7 11.5 L12 11.5 Z" fill="#000" stroke="#fff" stroke-width="1"/></svg>
</body></html>
